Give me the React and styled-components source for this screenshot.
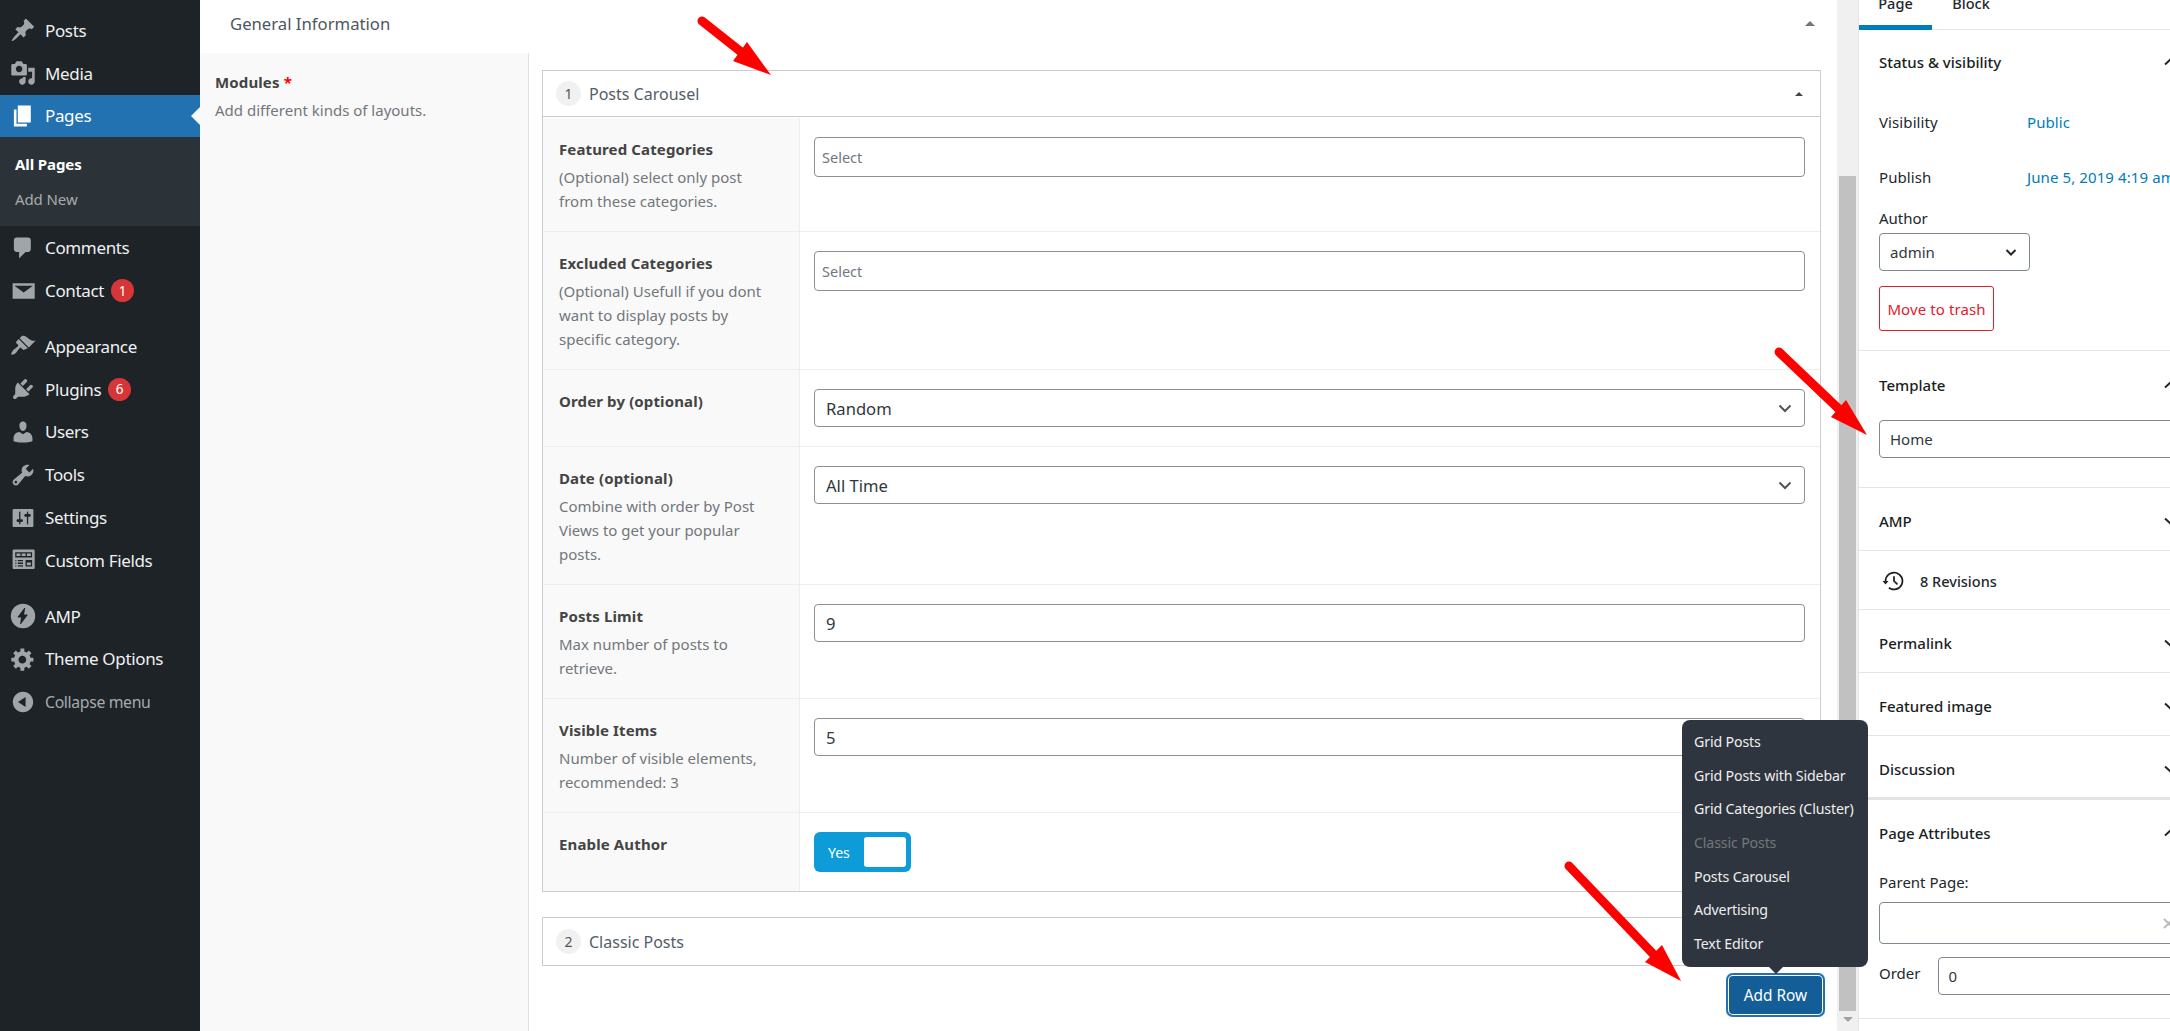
import React from 'react'
import styled, { createGlobalStyle } from 'styled-components'

const GlobalStyle = createGlobalStyle`
  html, body {
    margin: 0;
    padding: 0;
    height: 100%;
    background: #fff;
    overflow: hidden;
  }
  * {
    box-sizing: border-box;
  }
  body {
    font-family: "Noto Sans", "Open Sans", Arial, sans-serif;
  }
`

const Page = styled.div`
  position: relative;
  display: flex;
  width: 2170px;
  height: 1031px;
  overflow: hidden;
`

/* left admin menu */
const Sidebar = styled.nav`
  flex: 0 0 200px;
  padding-top: 9px;
  background: #1d2327;
`

const MenuItem = styled.div`
  position: relative;
  display: flex;
  align-items: center;
  height: 42.8px;
  padding-left: 9.5px;
  font-size: ${props => (props.$muted ? '15.8px' : '17px')};
  letter-spacing: -0.35px;
  color: ${props => (props.$muted ? '#a7aaad' : '#f0f0f1')};
  background: ${props => (props.$active ? '#2271b1' : 'transparent')};
  margin-top: ${props => (props.$gap ? '13px' : '0')};

  ${props => props.$active && `
    color: #fff;
    &::after {
      content: '';
      position: absolute;
      right: 0;
      top: 50%;
      margin-top: -9px;
      border: 9px solid transparent;
      border-right-color: #f9f9f9;
      border-left-width: 0;
    }
  `}
`

const MenuIcon = styled.svg`
  flex: 0 0 26px;
  width: 26px;
  height: 26px;
  margin-right: 9.5px;
  fill: ${props => (props.$active ? '#fff' : '#a0a5aa')};
`

const Badge = styled.span`
  display: inline-flex;
  align-items: center;
  justify-content: center;
  width: 23px;
  height: 23px;
  margin-left: 7px;
  border-radius: 50%;
  background: #d63638;
  color: #fff;
  font-size: 13.5px;
  letter-spacing: 0;
`

const Submenu = styled.div`
  height: 89px;
  padding-top: 9px;
  background: #2c3338;
`

const SubItem = styled.div`
  display: flex;
  align-items: center;
  height: 35px;
  padding-left: 15px;
  font-size: 15px;
  letter-spacing: -0.1px;
  font-weight: ${props => (props.$current ? 700 : 400)};
  color: ${props => (props.$current ? '#fff' : '#a7aaad')};
`

/* middle metabox */
const Main = styled.main`
  flex: 0 0 1637px;
  display: flex;
  flex-direction: column;
  height: 1031px;
`

const BoxHeader = styled.header`
  display: flex;
  align-items: center;
  justify-content: space-between;
  flex: 0 0 53px;
  padding: 0 22px 7px 30px;
  font-size: 16.7px;
  color: #50575e;
  background: #fff;
`

const Caret = styled.span`
  display: block;
  width: 0;
  height: 0;
  border-left: ${props => props.$size}px solid transparent;
  border-right: ${props => props.$size}px solid transparent;
  border-bottom: ${props => props.$size}px solid ${props => props.$color};
`

const BoxBody = styled.div`
  flex: 1;
  display: flex;
  min-height: 0;
`

const FieldLabel = styled.div`
  flex: 0 0 329px;
  padding: 17px 15px;
  background: #f9f9f9;
  border-right: 1px solid #e1e1e1;
`

const LabelTitle = styled.div`
  font-size: 15px;
  line-height: 24px;
  font-weight: 700;
  letter-spacing: 0.13px;
  color: #444;
  em {
    font-style: normal;
    color: #f00;
  }
`

const Description = styled.div`
  margin-top: 4px;
  font-size: 15px;
  line-height: 24px;
  color: #72777c;
`

const Repeater = styled.div`
  flex: 1;
  padding: 17px 16px 0 13px;
  background: #fff;
`

const Layout = styled.section`
  border: 1px solid #ccc;
  margin-bottom: ${props => (props.$last ? '7px' : '25px')};
`

const LayoutHead = styled.div`
  display: flex;
  align-items: center;
  height: ${props => (props.$open ? '46px' : '47px')};
  padding: 0 17px 0 13px;
  font-size: 16px;
  color: #555d66;
  border-bottom: ${props => (props.$open ? '1px solid #ccc' : '0')};
`

const Order = styled.span`
  display: flex;
  align-items: center;
  justify-content: center;
  width: 25px;
  height: 25px;
  margin-right: 8px;
  border-radius: 50%;
  background: #f1f1f1;
  font-size: 14px;
  color: #555;
`

const HeadTitle = styled.span`
  flex: 1;
`

const Row = styled.div`
  display: flex;
  border-top: 1px solid ${props => (props.$first ? 'transparent' : '#eee')};
`

const RowLabel = styled.div`
  flex: 0 0 257px;
  padding: 19px 16px 18px;
  background: #f9f9f9;
  border-right: 1px solid #eee;
`

const RowField = styled.div`
  flex: 1;
  padding: 19px 15px 19px 14px;
`

const TextInput = styled.div`
  display: flex;
  align-items: center;
  justify-content: space-between;
  height: 38px;
  padding: 0 11px;
  border: 1px solid #8c8f94;
  border-radius: 4px;
  background: #fff;
  font-size: 16.6px;
  color: #32373c;
`

const Placeholder = styled(TextInput)`
  height: 40px;
  padding: 0 7px;
  font-size: 14.5px;
  color: #72777c;
`

const Toggle = styled.div`
  display: flex;
  align-items: center;
  justify-content: space-between;
  width: 97px;
  height: 40px;
  padding: 0 5px 0 14px;
  border-radius: 6px;
  background: #0e9cd8;
  color: #fff;
  font-size: 14px;
`

const ToggleKnob = styled.span`
  width: 42px;
  height: 30px;
  border-radius: 3px;
  background: #fff;
`

const Actions = styled.div`
  display: flex;
  justify-content: flex-end;
  margin-right: -4px;
`

const AddWrap = styled.div`
  position: relative;
`

const AddRow = styled.button`
  display: block;
  width: 99px;
  height: 44px;
  padding: 0;
  border: 0;
  border-radius: 7px;
  box-shadow: inset 0 0 0 2px #2271b1, inset 0 0 0 3px #fff;
  background: #135e96;
  color: #fff;
  font-family: inherit;
  font-size: 15.4px;
`

const Popup = styled.div`
  position: absolute;
  right: -43px;
  bottom: calc(100% + 6px);
  z-index: 5;
  width: 186px;
  height: 247px;
  padding: 5px 0;
  border-radius: 8px;
  background: #2f353e;

  &::after {
    content: '';
    position: absolute;
    left: 87px;
    top: 100%;
    border: 7px solid transparent;
    border-top-color: #2f353e;
    border-bottom-width: 0;
  }
`

const PopupItem = styled.div`
  display: flex;
  align-items: center;
  height: 33.6px;
  padding-left: 12px;
  font-size: 14.2px;
  letter-spacing: -0.15px;
  white-space: nowrap;
  color: ${props => (props.$disabled ? '#72777c' : '#eee')};
`

/* fake scrollbar between main and side panel */
const Scrollbar = styled.div`
  flex: 0 0 21px;
  padding: 176px 2px 0;
  background: #f0f0f0;
  display: flex;
  flex-direction: column;
  align-items: center;
`

const ScrollThumb = styled.div`
  width: 100%;
  height: 835px;
  background: #c1c1c1;
`

const ScrollArrow = styled.div`
  margin-top: 6px;
  border-left: 5px solid transparent;
  border-right: 5px solid transparent;
  border-top: 5px solid #a3a3a3;
`

/* right document settings panel */
const Panel = styled.aside`
  flex: 0 0 312px;
  border-left: 1px solid #e2e4e7;
  overflow: hidden;
  background: #fff;
  color: #23282d;
`

const Tabs = styled.div`
  display: flex;
  height: 30px;
  border-bottom: 1px solid #e2e4e7;
`

const Tab = styled.div`
  flex: none;
  display: flex;
  align-items: flex-end;
  justify-content: center;
  width: ${props => props.$width}px;
  height: 30px;
  padding-bottom: 12px;
  border-bottom: 5px solid ${props => (props.$active ? '#007cba' : 'transparent')};
  font-size: 14.5px;
  line-height: 20px;
  font-weight: 500;

  span {
    flex: none;
    height: 20px;
  }
`

const Section = styled.section`
  width: 340px;
  padding: 0 20px;
  height: ${props => props.$height}px;
  border-bottom: ${props => (props.$thick ? '3px' : '1px')} solid #e2e4e7;
`

const SectionHead = styled.div`
  display: flex;
  align-items: center;
  justify-content: space-between;
  height: ${props => props.$height || 44}px;
  font-size: 15px;
  font-weight: 500;
  color: #191e23;
`

const Chevron = styled.svg`
  flex: none;
  width: 16px;
  height: 16px;
  fill: none;
  stroke: #23282d;
  stroke-width: 2;
`

const MetaRow = styled.div`
  display: flex;
  align-items: center;
  height: 22px;
  margin-top: ${props => props.$top || 0}px;
  margin-bottom: ${props => props.$gap}px;
  font-size: 15px;
  letter-spacing: 0.1px;
  white-space: nowrap;
`

const MetaName = styled.span`
  flex: 0 0 148px;
`

const MetaLink = styled.span`
  color: #007cba;
`

const FieldName = styled.div`
  margin-top: ${props => props.$top || 0}px;
  font-size: 15px;
  line-height: 20px;
`

const SideSelect = styled.div`
  flex: none;
  display: flex;
  align-items: center;
  justify-content: space-between;
  width: ${props => props.$width}px;
  height: ${props => props.$height || 38}px;
  padding: 0 ${props => props.$right || 10}px 0 10px;
  margin-top: ${props => props.$top || 0}px;
  margin-left: ${props => props.$left || 0}px;
  border: 1px solid #7e8993;
  border-radius: 4px;
  font-size: 15px;
  color: #32373c;
`

const TrashButton = styled.div`
  display: flex;
  align-items: center;
  justify-content: center;
  width: 115px;
  height: 45px;
  margin-top: 15px;
  border: 1px solid #e2202c;
  border-radius: 3px;
  font-size: 15px;
  letter-spacing: 0.1px;
  color: #e2202c;
`

const RevisionRow = styled.div`
  display: flex;
  align-items: center;
  height: 60px;
  font-size: 14.5px;
  font-weight: 500;
  color: #23282d;

  svg {
    width: 28px;
    height: 28px;
    margin: 0 12px 0 1px;
    fill: #1e1e1e;
  }
`

const OrderRow = styled.div`
  display: flex;
  align-items: center;
  margin-top: 13px;
  font-size: 15px;
`

const OrderLabel = styled.span`
  flex: none;
  padding-bottom: 6px;
`

const Clear = styled.span`
  color: #b4b9be;
  font-size: 18px;
`

const Arrows = styled.svg`
  position: absolute;
  left: 0;
  top: 0;
  z-index: 8;
  pointer-events: none;
`

const ICONS = {
  posts: 'M10.44 3.02l1.82-1.82 6.36 6.35-1.83 1.82c-1.05-.68-2.48-.57-3.41.36l-.75.75c-.92.93-1.04 2.35-.35 3.41l-1.83 1.82-2.41-2.41-2.8 2.79c-.42.42-3.38 2.71-3.8 2.29s1.86-3.39 2.28-3.81l2.79-2.79L4.1 9.36l1.83-1.82c1.05.69 2.48.57 3.4-.36l.75-.75c.93-.92 1.05-2.35.36-3.41z',
  media: 'M13 11V4c0-.55-.45-1-1-1h-1.67L9 1H5L3.67 3H2c-.55 0-1 .45-1 1v7c0 .55.45 1 1 1h10c.55 0 1-.45 1-1zM7 4.5c1.38 0 2.5 1.12 2.5 2.5S8.38 9.5 7 9.5 4.5 8.38 4.5 7 5.62 4.5 7 4.5zM14 6h5v10.5c0 1.38-1.12 2.5-2.5 2.5S14 17.88 14 16.5s1.12-2.5 2.5-2.5c.17 0 .34.02.5.05V9h-3V6zm-4 8.05V13h2v3.5c0 1.38-1.12 2.5-2.5 2.5S7 17.88 7 16.5 8.12 14 9.5 14c.17 0 .34.02.5.05z',
  pages: 'M6 15V2h10v13H6zm-1 1h8v2H3V5h2v11z',
  comments: 'M5 2h9c1.1 0 2 .9 2 2v7c0 1.1-.9 2-2 2h-2l-5 5v-5H5c-1.1 0-2-.9-2-2V4c0-1.1.9-2 2-2z',
  mail: 'M2 4h17v12H2V4zm8.5 7.2L17.6 6H3.4l7.1 5.2z',
  brush: 'M14.48 11.06L7.41 3.99l1.5-1.5c.5-.56 2.3-.47 3.51.32 1.21.8 1.43 1.28 2.91 2.1 1.18.64 2.45 1.26 4.45.85zm-.71.71L6.7 4.7 4.93 6.47c-.39.39-.39 1.02 0 1.41l1.06 1.06c.39.39.39 1.03 0 1.42-.6.6-1.43 1.11-2.21 1.69-.35.26-.7.53-1.01.84-1.34 1.34-2.11 3.16-1.6 3.66.5.5 2.32-.27 3.66-1.61.31-.31.58-.66.84-1.01.58-.78 1.09-1.61 1.69-2.21.39-.39 1.02-.39 1.41 0l1.06 1.06c.39.39 1.02.39 1.41 0z',
  plugins: 'M13.11 4.36L9.87 7.6 8 5.73l3.24-3.24c.35-.34 1.05-.2 1.56.32.52.51.66 1.21.31 1.55zm-8 1.77l.91-1.12 9.01 9.01-1.19.84c-.71.71-2.63 1.16-3.82 1.16H6.14L4.9 17.26c-.59.59-1.54.59-2.12 0-.59-.58-.59-1.53 0-2.12l1.24-1.24v-3.88c0-1.13.4-3.19 1.09-3.89zm7.26 3.97l3.24-3.24c.34-.35 1.04-.21 1.55.31.52.51.66 1.21.31 1.55l-3.24 3.25z',
  users: 'M10 9.25c-2.27 0-2.73-3.44-2.73-3.44C7 4.02 7.82 2 9.97 2c2.16 0 2.98 2.02 2.71 3.81 0 0-.41 3.44-2.68 3.44zm0 2.57L12.72 10c2.39 0 4.52 2.33 4.52 4.53v2.49s-3.65 1.13-7.24 1.13c-3.65 0-7.24-1.13-7.24-1.13v-2.49c0-2.25 1.94-4.48 4.47-4.48z',
  tools: 'M16.68 9.77c-1.34 1.34-3.3 1.67-4.95.99l-5.41 6.52c-.99.99-2.59.99-3.58 0s-.99-2.59 0-3.57l6.52-5.42c-.68-1.65-.35-3.61.99-4.95 1.28-1.28 3.12-1.62 4.72-1.06l-2.89 2.89 2.82 2.82 2.86-2.87c.53 1.58.18 3.39-1.08 4.65zM3.81 16.21c.4.39 1.04.39 1.43 0 .4-.4.4-1.04 0-1.43-.39-.4-1.03-.4-1.43 0-.39.39-.39 1.03 0 1.43z',
  settings: 'M18 16V4c0-.55-.45-1-1-1H3c-.55 0-1 .45-1 1v12c0 .55.45 1 1 1h14c.55 0 1-.45 1-1zM8 11h1c.55 0 1 .45 1 1s-.45 1-1 1H8v1.5c0 .28-.22.5-.5.5s-.5-.22-.5-.5V13H6c-.55 0-1-.45-1-1s.45-1 1-1h1V5.5c0-.28.22-.5.5-.5s.5.22.5.5V11zm5-2h-1c-.55 0-1-.45-1-1s.45-1 1-1h1V5.5c0-.28.22-.5.5-.5s.5.22.5.5V7h1c.55 0 1 .45 1 1s-.45 1-1 1h-1v5.5c0 .28-.22.5-.5.5s-.5-.22-.5-.5V9z',
  fields: 'M19 16V3c0-.55-.45-1-1-1H3c-.55 0-1 .45-1 1v13c0 .55.45 1 1 1h15c.55 0 1-.45 1-1zM4 4h13v4H4V4zm1 1v2h3V5H5zm4 0v2h3V5H9zm4 0v2h3V5h-3zm-8.5 5c.28 0 .5.22.5.5s-.22.5-.5.5-.5-.22-.5-.5.22-.5.5-.5zM6 10h4v1H6v-1zm6 0h5v5h-5v-5zm-7.5 2c.28 0 .5.22.5.5s-.22.5-.5.5-.5-.22-.5-.5.22-.5.5-.5zM6 12h4v1H6v-1zm7 0v2h3v-2h-3zm-8.5 2c.28 0 .5.22.5.5s-.22.5-.5.5-.5-.22-.5-.5.22-.5.5-.5zM6 14h4v1H6v-1z',
  amp: 'M10 0.6a9.4 9.4 0 1 0 0 18.8a9.4 9.4 0 0 0 0-18.8zM8.4 16.2h-.7l.9-5H6.1c-.3 0-.4-.2-.3-.4l5.2-7h.7l-.9 5h2.5c.3 0 .4.2.3.4z',
  gear: 'M18 12h-2.18c-.17.7-.44 1.35-.81 1.93l1.54 1.54-2.1 2.1-1.54-1.54c-.58.36-1.23.63-1.91.79V19H8v-2.18c-.68-.16-1.33-.43-1.91-.79l-1.54 1.54-2.12-2.12 1.54-1.54c-.36-.58-.63-1.23-.79-1.91H1V9.03h2.17c.16-.7.44-1.35.8-1.94L2.43 5.55l2.1-2.1 1.54 1.54c.58-.37 1.24-.64 1.93-.81V2h3v2.18c.68.16 1.33.43 1.91.79l1.54-1.54 2.12 2.12-1.54 1.54c.36.59.64 1.24.8 1.94H18V12zm-8.5 1.5c1.66 0 3-1.34 3-3s-1.34-3-3-3-3 1.34-3 3 1.34 3 3 3z',
  collapse: 'M10 2.16c4.33 0 7.84 3.51 7.84 7.84s-3.51 7.84-7.84 7.84S2.16 14.33 2.16 10 5.71 2.16 10 2.16zm2 11.72V6.12L6.18 9.97z',
}

const Item = ({icon, label, badge, active, gap, muted}) => (
  <MenuItem $active={active} $gap={gap} $muted={muted}>
    <MenuIcon viewBox="0 0 20 20" $active={active}><path fillRule="evenodd" d={ICONS[icon]} /></MenuIcon>
    {label}
    {badge && <Badge>{badge}</Badge>}
  </MenuItem>
)

const Up = () => <Chevron viewBox="0 0 16 16"><path d="M2 10.5 8 5l6 5.5" /></Chevron>
const Down = () => <Chevron viewBox="0 0 16 16"><path d="M2 5.5 8 11l6-5.5" /></Chevron>

const SelectArrow = styled.svg`
  flex: none;
  width: 16px;
  height: 16px;
  fill: none;
  stroke: ${props => props.$color || '#555'};
  stroke-width: 2;
`

const rows = [
  {title: 'Featured Categories', desc: ['(Optional) select only post', 'from these categories.'], field: <Placeholder>Select</Placeholder>},
  {title: 'Excluded Categories', desc: ['(Optional) Usefull if you dont', 'want to display posts by', 'specific category.'], field: <Placeholder>Select</Placeholder>},
  {title: 'Order by (optional)', desc: [], select: 'Random'},
  {title: 'Date (optional)', desc: ['Combine with order by Post', 'Views to get your popular', 'posts.'], select: 'All Time'},
  {title: 'Posts Limit', desc: ['Max number of posts to', 'retrieve.'], field: <TextInput>9</TextInput>},
  {title: 'Visible Items', desc: ['Number of visible elements,', 'recommended: 3'], field: <TextInput>5</TextInput>},
  {title: 'Enable Author', desc: [], field: <Toggle>Yes<ToggleKnob /></Toggle>},
]

const modules = ['Grid Posts', 'Grid Posts with Sidebar', 'Grid Categories (Cluster)', 'Classic Posts', 'Posts Carousel', 'Advertising', 'Text Editor']

const RedArrow = ({tail, neck, tip, a, b}) => (
  <g>
    <line x1={tail[0]} y1={tail[1]} x2={neck[0]} y2={neck[1]} stroke="#f00" strokeWidth="9" strokeLinecap="round" />
    <polygon points={`${tip} ${a} ${b}`} fill="#f00" />
  </g>
)

export default function App() {
  return (
    <Page>
      <GlobalStyle />
      <Sidebar>
        <Item icon="posts" label="Posts" />
        <Item icon="media" label="Media" />
        <Item icon="pages" label="Pages" active />
        <Submenu>
          <SubItem $current>All Pages</SubItem>
          <SubItem>Add New</SubItem>
        </Submenu>
        <Item icon="comments" label="Comments" />
        <Item icon="mail" label="Contact" badge="1" />
        <Item icon="brush" label="Appearance" gap />
        <Item icon="plugins" label="Plugins" badge="6" />
        <Item icon="users" label="Users" />
        <Item icon="tools" label="Tools" />
        <Item icon="settings" label="Settings" />
        <Item icon="fields" label="Custom Fields" />
        <Item icon="amp" label="AMP" gap />
        <Item icon="gear" label="Theme Options" />
        <Item icon="collapse" label="Collapse menu" muted />
      </Sidebar>

      <Main>
        <BoxHeader>
          General Information
          <Caret $size={5} $color="#72777c" />
        </BoxHeader>
        <BoxBody>
          <FieldLabel>
            <LabelTitle>Modules <em>*</em></LabelTitle>
            <Description>Add different kinds of layouts.</Description>
          </FieldLabel>
          <Repeater>
            <Layout>
              <LayoutHead $open>
                <Order>1</Order>
                <HeadTitle>Posts Carousel</HeadTitle>
                <Caret $size={4} $color="#444" />
              </LayoutHead>
              {rows.map((row, i) => (
                <Row key={row.title} $first={i === 0}>
                  <RowLabel>
                    <LabelTitle>{row.title}</LabelTitle>
                    {row.desc.length > 0 && (
                      <Description>{row.desc.map(line => <div key={line}>{line}</div>)}</Description>
                    )}
                  </RowLabel>
                  <RowField>
                    {row.select ? (
                      <TextInput>
                        {row.select}
                        <SelectArrow viewBox="0 0 16 16"><path d="M2.5 5.5 8 11l5.5-5.5" /></SelectArrow>
                      </TextInput>
                    ) : row.field}
                  </RowField>
                </Row>
              ))}
            </Layout>
            <Layout $last>
              <LayoutHead>
                <Order>2</Order>
                <HeadTitle>Classic Posts</HeadTitle>
              </LayoutHead>
            </Layout>
            <Actions>
              <AddWrap>
                <Popup>
                  {modules.map(name => (
                    <PopupItem key={name} $disabled={name === 'Classic Posts'}>{name}</PopupItem>
                  ))}
                </Popup>
                <AddRow>Add Row</AddRow>
              </AddWrap>
            </Actions>
          </Repeater>
        </BoxBody>
      </Main>

      <Scrollbar>
        <ScrollThumb />
        <ScrollArrow />
      </Scrollbar>

      <Panel>
        <Tabs>
          <Tab $active $width={73}><span>Page</span></Tab>
          <Tab $width={78}><span>Block</span></Tab>
        </Tabs>
        <Section $height={321}>
          <SectionHead $height={64}>Status &amp; visibility<Up /></SectionHead>
          <MetaRow $top={17} $gap={33}>
            <MetaName>Visibility</MetaName><MetaLink>Public</MetaLink>
          </MetaRow>
          <MetaRow $gap={20}>
            <MetaName>Publish</MetaName><MetaLink>June 5, 2019 4:19 am</MetaLink>
          </MetaRow>
          <FieldName>Author</FieldName>
          <SideSelect $width={151} $top={5}>
            admin
            <SelectArrow viewBox="0 0 16 16" $color="#23282d"><path d="M3.5 6 8 10.5 12.5 6" /></SelectArrow>
          </SideSelect>
          <TrashButton>Move to trash</TrashButton>
        </Section>
        <Section $height={137}>
          <SectionHead $height={67}>Template<Up /></SectionHead>
          <SideSelect $width={320} $top={2}>
            Home
            <SelectArrow viewBox="0 0 16 16" $color="#23282d"><path d="M3.5 6 8 10.5 12.5 6" /></SelectArrow>
          </SideSelect>
        </Section>
        <Section $height={63}><SectionHead $height={65}>AMP<Down /></SectionHead></Section>
        <Section $height={59}>
          <RevisionRow>
            <svg viewBox="0 0 24 24"><path d="M5.5 12h1.75l-2.5 3-2.5-3H4a8 8 0 113.134 6.35l.907-1.194A6.5 6.5 0 105.5 12zm9.53 1.97l-2.28-2.28V8.5a.75.75 0 00-1.5 0V12a.747.747 0 00.218.529l2.5 2.5a.75.75 0 101.062-1.059z" /></svg>
            8 Revisions
          </RevisionRow>
        </Section>
        <Section $height={63}><SectionHead $height={65}>Permalink<Down /></SectionHead></Section>
        <Section $height={63}><SectionHead $height={66}>Featured image<Down /></SectionHead></Section>
        <Section $height={64} $thick><SectionHead $height={66}>Discussion<Down /></SectionHead></Section>
        <Section $height={219}>
          <SectionHead $height={66}>Page Attributes<Up /></SectionHead>
          <FieldName $top={6}>Parent Page:</FieldName>
          <SideSelect $width={320} $height={42} $top={10} $right={22}>
            <span />
            <Clear>✕</Clear>
          </SideSelect>
          <OrderRow>
            <OrderLabel>Order</OrderLabel>
            <SideSelect $width={300} $left={17}>0</SideSelect>
          </OrderRow>
        </Section>
      </Panel>

      <Arrows width="2170" height="1031" viewBox="0 0 2170 1031">
        <RedArrow tail={[702, 21]} neck={[745, 55]} tip={[771, 75]} a={[747, 42]} b={[733, 61]} />
        <RedArrow tail={[1779, 352]} neck={[1842, 412]} tip={[1867, 435]} a={[1846, 400]} b={[1831, 417]} />
        <RedArrow tail={[1569, 866]} neck={[1656, 957]} tip={[1681, 981]} a={[1662, 945]} b={[1645, 962]} />
      </Arrows>
    </Page>
  )
}
